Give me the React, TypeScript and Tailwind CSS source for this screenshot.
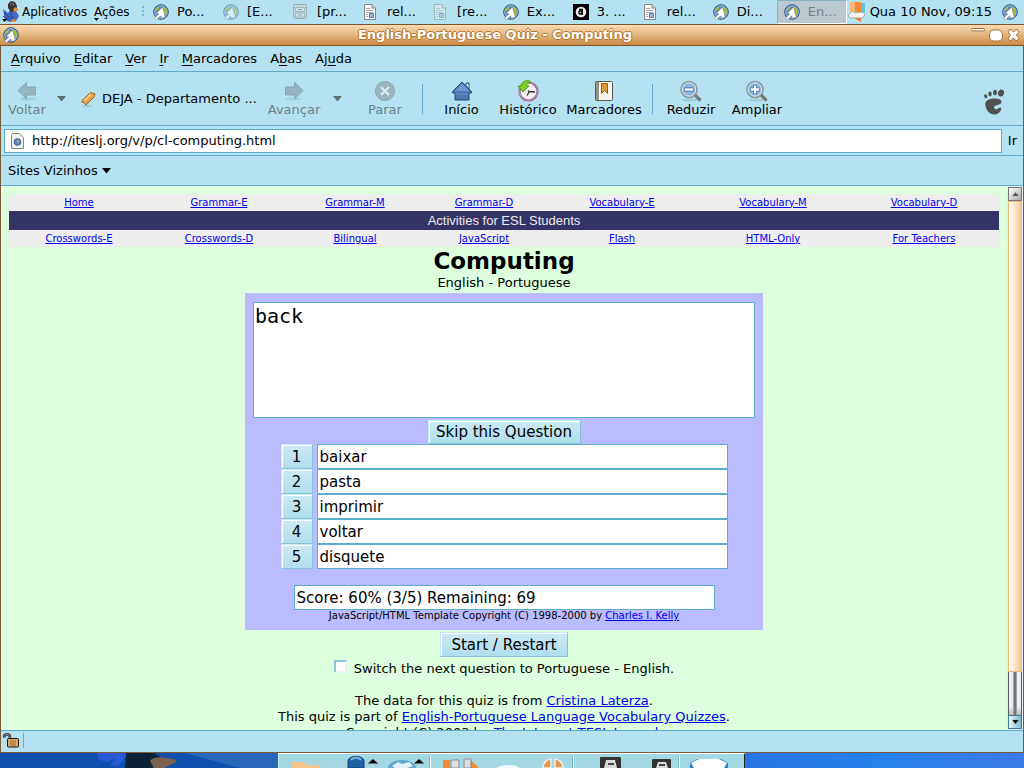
import type { ReactNode } from "react";

type IconKind = "web" | "doc" | "cabinet" | "amazon";

interface Task {
  label: string;
  icon: IconKind;
  dim?: boolean;
  active?: boolean;
}

const TASKS: Task[] = [
  { label: "Po...", icon: "web" },
  { label: "[E...", icon: "web", dim: true },
  { label: "[pr...", icon: "cabinet", dim: true },
  { label: "rel...", icon: "doc" },
  { label: "[re...", icon: "doc", dim: true },
  { label: "Ex...", icon: "web" },
  { label: "3. ...", icon: "amazon" },
  { label: "rel...", icon: "doc" },
  { label: "Di...", icon: "web" },
  { label: "En...", icon: "web", active: true },
];

// [before, access key, after]
const MENUS = [
  ["", "A", "rquivo"],
  ["", "E", "ditar"],
  ["", "V", "er"],
  ["", "I", "r"],
  ["", "M", "arcadores"],
  ["A", "b", "as"],
  ["Aj", "u", "da"],
];

const NAV_TOP = ["Home", "Grammar-E", "Grammar-M", "Grammar-D", "Vocabulary-E", "Vocabulary-M", "Vocabulary-D"];
const NAV_BOTTOM = ["Crosswords-E", "Crosswords-D", "Bilingual", "JavaScript", "Flash", "HTML-Only", "For Teachers"];
const ANSWERS = ["baixar", "pasta", "imprimir", "voltar", "disquete"];

const FIELD = "border border-[#5badc9] bg-white outline-none";
const BUTTON =
  "border border-t-[#c8eaf5] border-l-[#c8eaf5] border-r-[#85c3d7] border-b-[#85c3d7] bg-linear-to-b from-[#cbeaf5] to-[#b0deed] shadow-[inset_1px_1px_0_#ffffff]";

function WebIcon() {
  return (
    <svg width="16" height="16" viewBox="0 0 16 16">
      <circle cx="8" cy="8" r="7.3" fill="#4f7fc0" stroke="#2d4f86" />
      <circle cx="8" cy="8" r="6.2" fill="none" stroke="#a8c4e8" />
      <path d="M9 2.500l3 1 2 3-.5 4-1.500 1-2-4z" fill="#a5bb3a" />
      <path d="M3 4l3.500-1.500L6 5 3 7.500z" fill="#a5bb3a" />
      <path d="M9.500 3L3 9.500l2.800.5L1.500 14l2 1.700 4-3.700 1.200 2.300 3.800-.8z" fill="#fff" stroke="#777" strokeWidth=".6" />
    </svg>
  );
}

function DocIcon() {
  return (
    <svg width="14" height="16" viewBox="0 0 14 16">
      <path d="M1.5.5H9l3.5 3.5v11.5h-11z" fill="#f4f4f4" stroke="#888" />
      <path d="M9 .5V4h3.5" fill="#ddd" stroke="#888" />
      <path d="M3 4.5h4M3 6.5h7M3 8.5h7M3 10.5h2M3 12.5h2" stroke="#aaa" />
      <path d="M6.5 9.500h4v4h-4z" fill="#9ab8df" stroke="#5b7fb8" />
    </svg>
  );
}

function CabinetIcon() {
  return (
    <svg width="14" height="16" viewBox="0 0 14 16">
      <rect x=".5" y=".5" width="13" height="14" rx="1" fill="#d6d6d2" stroke="#777" />
      <path d="M2.500 3.500h9v4h-9zM2.500 9h9v4h-9z" fill="#e8e8e4" stroke="#888" />
      <path d="M5 5.500h4M5 11h4" stroke="#666" />
    </svg>
  );
}

function AmazonIcon() {
  return (
    <svg width="16" height="16" viewBox="0 0 16 16">
      <path d="M0 0h16v16H0z" fill="#000" />
      <circle cx="8" cy="8" r="5.300" fill="#eee" />
      <circle cx="7.500" cy="8.500" r="1.600" fill="none" stroke="#111" strokeWidth="1.600" />
      <path d="M6 5.500h3.300V11" fill="none" stroke="#111" strokeWidth="1.400" />
    </svg>
  );
}

function TaskIcon({ kind }: { kind: IconKind }) {
  if (kind === "web") return <WebIcon />;
  if (kind === "doc") return <DocIcon />;
  if (kind === "cabinet") return <CabinetIcon />;
  return <AmazonIcon />;
}

function BirdIcon() {
  return (
    <svg width="18" height="22" viewBox="0 0 18 22" className="shrink-0">
      <path d="M1 8l5 4 2-3 6 1 3 5-3 5-6 1-5-2z" fill="#4568c4" />
      <path d="M2 12l8 7M1 15l7 5M8 11l3 7" stroke="#243f91" />
      <path d="M6 3l3-3 4 1 2 4-1 5-5 1-3-4z" fill="#333338" />
      <path d="M8 4l3-2 1 3" stroke="#777" fill="none" />
      <path d="M13 6l4 3-4 2-2-2z" fill="#ec8e35" />
      <path d="M9 19l4-1v3H9z" fill="#e28c3e" />
      <path d="M0 18h5l-2.500 3z" fill="#000" />
    </svg>
  );
}

function TrayIcon() {
  return (
    <svg width="19" height="20" viewBox="0 0 19 20" className="shrink-0">
      <path d="M3 0h11v10H3z" fill="#f58a32" />
      <path d="M3 0h5v10H3z" fill="#fbb777" />
      <path d="M14 1h4v10h-4z" fill="#63c2d3" />
      <path d="M7 16h7v4z" fill="#f07a1c" />
      <path d="M1 14l4-5 3 2 8-1 2 3-3 3H3z" fill="#f6f6f6" stroke="#999" strokeWidth=".8" />
    </svg>
  );
}

function TopPanel() {
  return (
    <header className="flex h-6 shrink-0 items-center overflow-hidden bg-[#b4e2f0] whitespace-nowrap">
      <div className="flex w-[147px] shrink-0 items-center text-[12px]">
        <div className="pl-0.5">
          <BirdIcon />
        </div>
        <button type="button" className="ml-0.5 w-[66px] text-left">Aplicativos</button>
        <button type="button" className="ml-1.5 flex flex-col">
          Ações
          <svg width="5" height="3" viewBox="0 0 5 3" className="-mt-0.5 -mb-px">
            <path d="M0 0h5L2.500 3z" fill="#000" />
          </svg>
        </button>
        <svg width="2" height="12" viewBox="0 0 2 12" className="ml-3">
          <path d="M0 1h2M0 5h2M0 9h2" stroke="#5badc9" strokeWidth="1.500" />
        </svg>
      </div>
      <nav className="flex h-full min-w-0 flex-1">
        {TASKS.map((task, i) => (
          <button
            key={i}
            type="button"
            className={`flex h-full w-[70px] items-center pl-1.5 ${
              task.active
                ? "border border-t-[#7fb3c2] border-r-white border-b-white border-l-[#7fb3c2] bg-[#bbc8cf] text-[#777f83]"
                : ""
            }`}
          >
            <span className={`flex w-6 ${task.dim ? "opacity-50" : ""}`}>
              <TaskIcon kind={task.icon} />
            </span>
            {task.label}
          </button>
        ))}
      </nav>
      <div className="flex shrink-0 items-center pr-1.5">
        <TrayIcon />
        <time className="mr-2.5 ml-1">Qua 10 Nov, 09:15</time>
        <WebIcon />
      </div>
    </header>
  );
}

function TitleBar() {
  return (
    <div className="flex h-[22px] shrink-0 items-center border-y border-[#7a5429] bg-linear-to-b from-[#fbdcb4] to-[#c98b42] px-[3px]">
      <WebIcon />
      <h1 className="flex-1 text-center font-bold text-white [text-shadow:-1px_0_#b5762c,1px_0_#b5762c,0_1px_#b5762c,0_-1px_#b5762c]">
        English-Portuguese Quiz - Computing
      </h1>
      <svg width="50" height="16" viewBox="0 0 50 16" fill="#fff" stroke="#a87438">
        <rect x=".5" y="1.500" width="13" height="2.500" rx="1" />
        <rect x="18.500" y="3" width="13" height="11" rx="4" />
        <path d="M38 3l2-.8 2.500 3 2.500-3 2 .8 1 2-2.700 3 2.700 3-1 2-2 .8-2.500-3-2.500 3-2-.8-1-2 2.700-3-2.700-3z" />
      </svg>
    </div>
  );
}

function ToolButton({ label, icon, className, disabled }: { label: string; icon: ReactNode; className: string; disabled?: boolean }) {
  return (
    <button
      type="button"
      disabled={disabled}
      className={`flex shrink-0 flex-col items-center ${disabled ? "text-[#6c7f86]" : ""} ${className}`}
    >
      <span className="flex h-[23px] items-center">{icon}</span>
      <span className="leading-4">{label}</span>
    </button>
  );
}

function ArrowIcon({ flip }: { flip?: boolean }) {
  return (
    <svg width="20" height="20" viewBox="0 0 20 20" className={flip ? "-scale-x-100" : ""}>
      <ellipse cx="11" cy="18" rx="8" ry="1.500" fill="#a2cfdd" />
      <path d="M1 9.500L9.500 1.500V6H18.500v8H9.500v4z" fill="#95b4bd" stroke="#86a6b0" />
    </svg>
  );
}

function Caret({ className }: { className: string }) {
  return (
    <svg width="9" height="6" viewBox="0 0 9 6" className={`shrink-0 ${className}`}>
      <path d="M0 0h9L4.500 5.500z" fill="currentColor" />
    </svg>
  );
}

function StopIcon() {
  return (
    <svg width="22" height="22" viewBox="0 0 22 22">
      <circle cx="11" cy="11" r="9.500" fill="#9cb4bb" stroke="#8aa5ae" />
      <path d="M7 7l8 8M15 7l-8 8" stroke="#d8edf3" strokeWidth="2.300" />
    </svg>
  );
}

function HomeIcon() {
  return (
    <svg width="22" height="22" viewBox="0 0 22 22">
      <path d="M15 3h3v6h-3z" fill="#dce7f3" stroke="#294d80" />
      <path d="M11 2L1.500 11.500V13H4v7h14v-7h2.500v-1.500z" fill="#4a78b5" stroke="#234a80" />
      <path d="M11 3.500L4 11h14z" fill="#6e98cd" />
      <path d="M5 14h12" stroke="#6d97cb" />
    </svg>
  );
}

function HistoryIcon() {
  return (
    <svg width="22" height="22" viewBox="0 0 22 22">
      <circle cx="11.500" cy="11.500" r="9" fill="#f3f1f1" stroke="#8d5d8a" strokeWidth="2.200" />
      <circle cx="11.500" cy="11.500" r="9" fill="none" stroke="#d2a9ce" strokeWidth=".7" />
      <path d="M10 15.500l2.500-4 5.500.5M12.500 11.500l-1.500-1" fill="none" stroke="#333" strokeWidth="1.300" />
      <path d="M13 1C8 0 4.500 2 4 6H1l5 6 6-6-3-.3C9.500 4 11 3 13 3z" fill="#7ed321" stroke="#3f8a0c" strokeWidth=".8" />
    </svg>
  );
}

function BookIcon() {
  return (
    <svg width="20" height="22" viewBox="0 0 20 22">
      <rect x="1.500" y="1.500" width="17" height="19" rx="1" fill="#f5f4ef" stroke="#5c564c" />
      <path d="M2 2h3v18H2z" fill="#9b9486" />
      <path d="M5.500 2v18" stroke="#fff" />
      <path d="M7.500 3.500h6v10l-3-3-3 3z" fill="#dc9a35" stroke="#986116" />
    </svg>
  );
}

function ZoomIcon({ plus }: { plus?: boolean }) {
  return (
    <svg width="22" height="22" viewBox="0 0 22 22">
      <ellipse cx="10" cy="20" rx="8" ry="1.500" fill="#9fcbd8" />
      <path d="M15 15l5.500 5.500" stroke="#777a74" strokeWidth="3.200" />
      <circle cx="9" cy="9.500" r="8" fill="#8db4e0" stroke="#8c9293" strokeWidth="1.500" />
      <circle cx="9" cy="9.500" r="6.700" fill="none" stroke="#dfe9ef" />
      <path d={plus ? "M4.500 9.500h9M9 5v9" : "M4.500 9.500h9"} stroke="#3c6ba8" strokeWidth="4" />
      <path d={plus ? "M5 9.500h8M9 5.500v8" : "M5 9.500h8"} stroke="#fff" strokeWidth="2.300" />
    </svg>
  );
}

function FootIcon() {
  return (
    <svg width="22" height="26" viewBox="0 0 22 26" fill="#505050" className="mt-1.5 mr-[18px] ml-auto shrink-0">
      <ellipse cx="18" cy="4" rx="3" ry="3.500" transform="rotate(20 18 4)" />
      <ellipse cx="12" cy="3.500" rx="1.900" ry="2.800" />
      <ellipse cx="7" cy="5" rx="1.700" ry="2.400" />
      <ellipse cx="2.700" cy="7.300" rx="1.500" ry="2.100" transform="rotate(-20 2.700 7.300)" />
      <path d="M13 9.500C6 9 1 11.500 2.500 17c1 5 4.500 9 9.500 8.500 4.500-.5 6.500-4.500 6.300-6.500-1.200-1.500-2.400.3-4 1-2 .7-3.600-.5-3.300-2 .6-2.300 7-1.500 7.500-5 .2-2-2.500-3.300-5.500-3.500z" />
    </svg>
  );
}

function Divider() {
  return <div className="h-[30px] w-px shrink-0 bg-[#5badc9]" />;
}

function Toolbar() {
  return (
    <div className="flex h-[54px] shrink-0 items-center border-b border-[#5badc9] whitespace-nowrap">
      <ToolButton disabled label="Voltar" className="w-[52px]" icon={<ArrowIcon />} />
      <Caret className="ml-1 text-[#5f6d72]" />
      <button type="button" className="ml-[15px] flex w-[178px] shrink-0 items-center gap-1.5">
        <svg width="15" height="16" viewBox="0 0 15 16">
          <ellipse cx="6" cy="15" rx="5" ry="1" fill="#9fcbd8" />
          <path d="M9.500 1.500L14 3 13.500 5.500 5 14l-2.200-2.700L1 11.500V9.500z" fill="#e6a548" stroke="#966318" />
          <path d="M9.500 3.500l-6 6" stroke="#f8d397" strokeWidth="1.500" />
        </svg>
        DEJA - Departamento ...
      </button>
      <ToolButton disabled label="Avançar" className="w-[70px]" icon={<ArrowIcon flip />} />
      <Caret className="ml-1 text-[#5f6d72]" />
      <ToolButton disabled label="Parar" className="mr-2 ml-3.5 w-[58px]" icon={<StopIcon />} />
      <Divider />
      <ToolButton label="Início" className="w-[77px]" icon={<HomeIcon />} />
      <ToolButton label="Histórico" className="w-[56px]" icon={<HistoryIcon />} />
      <ToolButton label="Marcadores" className="w-[96px]" icon={<BookIcon />} />
      <Divider />
      <ToolButton label="Reduzir" className="w-[76px]" icon={<ZoomIcon />} />
      <ToolButton label="Ampliar" className="w-[56px]" icon={<ZoomIcon plus />} />
      <FootIcon />
    </div>
  );
}

function AddressBar() {
  return (
    <form className="flex h-[30px] shrink-0 items-center border-b border-[#5badc9] pr-1.5 pl-[3px]">
      <label className={`flex h-6 min-w-0 flex-1 items-center gap-2 pl-1.5 ${FIELD}`}>
        <svg width="13" height="16" viewBox="0 0 13 16">
          <path d="M.5 1.500l1-1h7l4 4v11H.5z" fill="#f0f0ee" stroke="#858585" />
          <circle cx="6.500" cy="9" r="3.300" fill="#5b86c2" stroke="#355a92" />
          <path d="M5.500 7l2.500 1-1 3z" fill="#a7be3c" />
        </svg>
        <input aria-label="Endereço" defaultValue="http://iteslj.org/v/p/cl-computing.html" className="min-w-0 flex-1 outline-none" />
      </label>
      <button type="button" className="ml-1.5">Ir</button>
    </form>
  );
}

function NavRow({ items }: { items: string[] }) {
  return (
    <tr className="h-[17px] bg-[#eeeeee] text-[10px] leading-3">
      {items.map((item) => (
        <td key={item} className="p-0 text-center">
          <a href="#" className="text-[#0000ee] underline">{item}</a>
        </td>
      ))}
    </tr>
  );
}

function SiteNav() {
  return (
    <table className="w-full table-fixed border-collapse">
      <colgroup>
        <col className="w-[140px]" />
        <col className="w-[140px]" />
        <col className="w-[132px]" />
        <col className="w-[126px]" />
        <col className="w-[150px]" />
        <col className="w-[152px]" />
        <col className="w-[150px]" />
      </colgroup>
      <tbody>
        <NavRow items={NAV_TOP} />
        <tr className="h-[19px] bg-[#333366]">
          <td colSpan={7} className="p-0 text-center font-['Liberation_Sans',sans-serif] text-[13px] leading-4 text-[#eeeeee]">
            Activities for ESL Students
          </td>
        </tr>
        <NavRow items={NAV_BOTTOM} />
      </tbody>
    </table>
  );
}

function Quiz() {
  return (
    <form className="flex flex-col items-center">
      <div className="flex w-[518px] flex-col items-center bg-[#bbbbff] px-2 pt-[9px] pb-2 text-[15px]">
        <textarea
          aria-label="Question"
          readOnly
          defaultValue="back"
          className={`h-[116px] w-full resize-none px-px py-px font-['DejaVu_Sans_Mono',monospace] text-[20px] leading-6 ${FIELD}`}
        />
        <button type="button" className={`mt-0.5 h-6 w-[153px] leading-5 ${BUTTON}`}>Skip this Question</button>
        <ol className="w-[447px]">
          {ANSWERS.map((answer, i) => (
            <li key={answer} className="flex h-[25px] gap-1">
              <button type="button" className={`w-8 ${BUTTON}`}>{i + 1}</button>
              <input aria-label={`Answer ${i + 1}`} readOnly defaultValue={answer} className={`min-w-0 flex-1 px-0.5 ${FIELD}`} />
            </li>
          ))}
        </ol>
        <input
          aria-label="Score"
          readOnly
          defaultValue="Score: 60% (3/5) Remaining: 69"
          className={`mt-4 h-[25px] w-[421px] px-0.5 ${FIELD}`}
        />
        <p className="text-[10px] leading-3">
          JavaScript/HTML Template Copyright (C) 1998-2000 by{" "}
          <a href="#" className="text-[#0000ee] underline">Charles I. Kelly</a>
        </p>
      </div>
      <button type="button" className={`mt-0.5 h-[25px] w-32 text-[15px] ${BUTTON}`}>Start / Restart</button>
      <label className="mt-0.5 flex h-[19px] items-center gap-[7px]">
        <input
          type="checkbox"
          className="mb-1 size-[13px] appearance-none border-2 border-t-[#8cc4d8] border-r-[#e4f3f8] border-b-[#e4f3f8] border-l-[#8cc4d8] bg-white"
        />
        Switch the next question to Portuguese - English.
      </label>
    </form>
  );
}

function Page() {
  return (
    <main className="min-w-0 flex-1 overflow-hidden bg-[#ddffdd] p-2 text-center leading-4">
      <SiteNav />
      <h2 className="text-[23px] leading-7 font-bold">Computing</h2>
      <p className="pb-0.5">English - Portuguese</p>
      <Quiz />
      <div className="pt-[15px]">
        <p>
          The data for this quiz is from <a href="#" className="text-[#0000ee] underline">Cristina Laterza</a>.
        </p>
        <p>
          This quiz is part of{" "}
          <a href="#" className="text-[#0000ee] underline">English-Portuguese Language Vocabulary Quizzes</a>.
        </p>
        <p>
          Copyright (C) 2003 by <a href="#" className="text-[#0000ee] underline">The Internet TESL Journal</a>.
        </p>
      </div>
    </main>
  );
}

function ScrollBar() {
  return (
    <div className="flex w-4 shrink-0 flex-col bg-[#e8eef0] p-px">
      <button type="button" aria-label="Scroll up" className="flex h-[14px] items-center justify-center border border-[#777] bg-linear-to-br from-white to-[#aaa] text-[#555]">
        <Caret className="-scale-75" />
      </button>
      <div className="flex min-h-0 flex-1 flex-col">
        <div className="min-h-0 flex-[11] border border-[#edb873] bg-linear-to-r from-white to-[#f5c890]" />
        <div className="flex min-h-0 flex-1 justify-center border-x border-[#55606a] bg-linear-to-b from-[#eeeeee] from-80% to-[#bbbbbb]">
          <div className="w-1 border-x border-[#9aa5a6] bg-[#687a7c]" />
        </div>
      </div>
      <button type="button" aria-label="Scroll down" className="flex h-[14px] items-center justify-center border border-[#3e7b92] bg-linear-to-r from-[#e5f6fb] to-[#7cbcd1]">
        <Caret className="scale-75" />
      </button>
    </div>
  );
}

function StatusBar() {
  return (
    <footer className="flex h-[22px] shrink-0 border-t border-[#5badc9] pt-0.5 pl-0.5">
      <svg width="18" height="15" viewBox="0 0 18 15">
        <path d="M1 5c0-5 6-5 6 0v1" fill="none" stroke="#222" strokeWidth="2.500" />
        <path d="M1 5c0-5 6-5 6 0v1" fill="none" stroke="#ccc" strokeWidth=".8" />
        <rect x="4.500" y="5.500" width="11" height="8.500" rx="1" fill="#dba764" stroke="#1c1409" />
        <path d="M7 8h6M7 10h6M7 12h6" stroke="#a06d2c" />
      </svg>
      <div className="ml-0.5 h-[15px] w-px bg-[#5badc9]" />
    </footer>
  );
}

function Dock() {
  return (
    <div className="flex h-[15px] shrink-0 justify-center overflow-hidden bg-linear-to-r from-[#0d47a3] to-[#3b7be6]">
      <svg height="15" viewBox="0 0 278 15" className="w-[278px] shrink-0">
        <path d="M0 0h278v15H0z" fill="#0f50ad" />
        <path d="M185 0h93v15h-38z" fill="#2868b9" />
        <path d="M97 0h43l-8 5-6-1-8 9-7-1 4-7-7 4-9-2z" fill="#285ad4" />
        <path d="M126 0h28l8 5-10 10h-27z" fill="#0d2237" />
        <path d="M150 8c5-7 20-2 27-1-2 5-8 4-12 8h-11z" fill="#7c614f" />
      </svg>
      <svg height="15" viewBox="0 0 467 15" className="w-[467px] shrink-0">
        <path d="M0 0h467v15H0z" fill="#a4d9e4" />
        <path d="M0 15V.500h466" stroke="#fff" fill="none" />
        <path d="M466.500 1v14" stroke="#222" />
        <path d="M14 15V9h14v3h14v3z" fill="#f7c48d" />
        <path d="M70 15V8c0-6 16-6 16 0v7z" fill="#1e63a6" stroke="#123f72" />
        <path d="M73 7c2-3 8-3 10 0" fill="none" stroke="#7fb5e0" strokeWidth="2" />
        <path d="M90 10.500l5-4.500 5 4.500zM136 10.500l5-4.500 5 4.500z" fill="#000" />
        <ellipse cx="124" cy="15" rx="14" ry="8" fill="#5fa7d0" />
        <path d="M114 13l6-4 4 2 7-2 4 4-6 2h-12z" fill="#e4f2f8" />
        <path d="M152.500 4v11M295.500 4v11M401.500 4v11" stroke="#fff" />
        <path d="M151.500 4v11M294.500 4v11M400.500 4v11" stroke="#69b6cb" />
        <path d="M165 15V7h7v8zM192 15V6l9 9z" fill="#f08b35" />
        <path d="M173 7h8v8h-8zM186 6h7v9h-7z" fill="#ddd" stroke="#888" />
        <path d="M218 15c6-4 20-4 24 0z" fill="#edf8fa" />
        <path d="M265 15c0-5 4-9 8-9v9zM285 15c0-5-4-9-8-9v9z" fill="#e3974f" stroke="#eee" strokeWidth="1.500" />
        <rect x="322" y="4" width="21" height="14" rx="1" fill="#333" />
        <rect x="374" y="6" width="19" height="12" rx="1" fill="#333" />
        <path d="M326 15l2-8h9l2 8zM378 15l2-6h8l2 6z" fill="#d8d8d8" />
        <path d="M330 11h6M381 12h6" stroke="#444" strokeWidth="2" />
        <path d="M412 15v-5l7-4h24l7 4v5z" fill="#2c83c4" />
        <path d="M413 10l8-4h20l8 4-3 5h-30z" fill="#fff" />
      </svg>
      <div className="min-w-0 flex-1 bg-linear-to-r from-[#2674e0] via-[#2682ea] to-[#3b7be6]" />
    </div>
  );
}

export default function App() {
  return (
    <div className="flex h-screen flex-col overflow-hidden bg-[#b4e2f0] font-['DejaVu_Sans',sans-serif] text-[13px] leading-4 text-black">
      <TopPanel />
      <TitleBar />
      <div className="flex min-h-0 flex-1 flex-col border-x border-b border-[#7a5a38]">
        <nav className="flex h-[26px] shrink-0 items-center gap-[13px] border-b border-[#5badc9] pl-2.5">
          {MENUS.map(([before, key, after]) => (
            <button key={after} type="button">
              {before}
              <span className="underline underline-offset-2">{key}</span>
              {after}
            </button>
          ))}
        </nav>
        <Toolbar />
        <AddressBar />
        <div className="flex h-[30px] shrink-0 items-center border-b border-[#5badc9] pl-[7px]">
          <button type="button" className="flex items-center gap-1">
            Sites Vizinhos <Caret className="" />
          </button>
        </div>
        <div className="flex min-h-0 flex-1">
          <Page />
          <ScrollBar />
        </div>
        <StatusBar />
      </div>
      <Dock />
    </div>
  );
}
